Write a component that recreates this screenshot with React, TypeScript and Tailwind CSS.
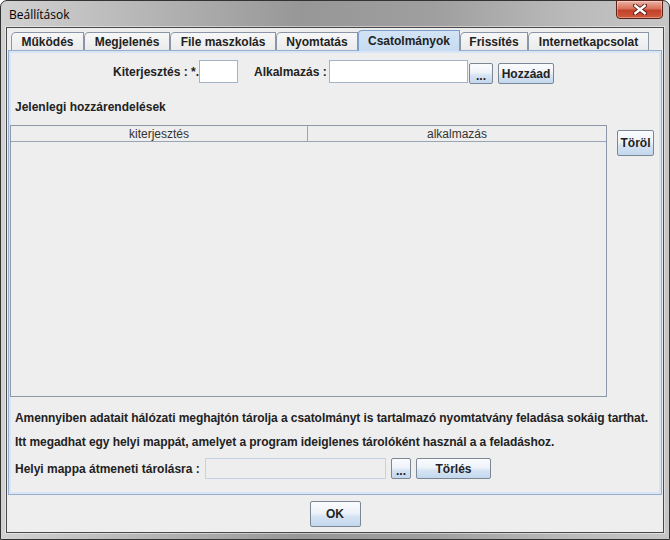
import React from "react";

const tabs = [
  { label: "Működés", w: 73 },
  { label: "Megjelenés", w: 86 },
  { label: "File maszkolás", w: 106 },
  { label: "Nyomtatás", w: 82 },
  { label: "Csatolmányok", w: 102, sel: true },
  { label: "Frissítés", w: 68 },
  { label: "Internetkapcsolat", w: 121 },
];

const btn =
  "flex items-center justify-center border border-[#7c8796] rounded-[2px] bg-[linear-gradient(to_bottom,#fbfcfe_0%,#eef3f9_45%,#d6e4f3_60%,#c3d7ee_100%)] text-[12px] font-bold text-[#222] leading-none";

function CloseX() {
  return (
    <svg width="14" height="11" viewBox="0 0 14 11">
      <path d="M2 1.5 L12 9.5 M12 1.5 L2 9.5" stroke="#5a1a12" strokeWidth="4.2" strokeLinecap="square" />
      <path d="M2.3 1.8 L11.7 9.2 M11.7 1.8 L2.3 9.2" stroke="#ffffff" strokeWidth="2.4" strokeLinecap="square" />
    </svg>
  );
}

export default function App() {
  return (
    <div
      className="w-[670px] h-[540px] bg-white"
      style={{ fontFamily: '"Liberation Sans", Arial, sans-serif' }}
    >
      <div className="w-full h-full flex flex-col rounded-t-[7px] border border-[#333] bg-[linear-gradient(to_right,#d2d2d2_0%,#b5b5b5_22%,#979797_45%,#9f9f9f_65%,#bababa_85%,#c6c6c6_100%)]">
        {/* title bar */}
        <div className="h-[26px] flex items-start shrink-0">
          <div
            className="pl-[8px] pt-[6px] text-[12px] leading-[16px] text-black"
            style={{ fontFamily: '"Open Sans", "Noto Sans", sans-serif' }}
          >
            Beállítások
          </div>
          <div className="ml-auto mr-[6px] -mt-[1px] w-[47px] h-[19px] rounded-b-[4px] border border-[#5b2219] bg-[linear-gradient(to_bottom,#eab3a5_0%,#d9705b_45%,#c2412a_55%,#d2593c_100%)] flex items-center justify-center shadow-[inset_0_0_0_1px_rgba(255,255,255,0.35)]">
            <CloseX />
          </div>
        </div>

        {/* client area */}
        <div className="flex-1 mx-[5px] mb-[6px] border border-[#4a4a4a] bg-[#eeeeee] flex flex-col shadow-[0_0_0_1px_rgba(255,255,255,0.45)]">
          {/* tabbed pane */}
          <div className="mx-[1px] mt-[3px] flex flex-col">
            <div className="h-[19px] flex items-end pl-[3px]">
              {tabs.map((t) =>
                t.sel ? (
                  <div
                    key={t.label}
                    style={{ width: t.w }}
                    className="relative z-10 -mb-[1px] h-[21px] rounded-tl-[4px] border border-b-0 border-[#7b9dca] bg-[linear-gradient(to_bottom,#d2e3f5,#c7dcf2)] flex items-start justify-center pt-[3px] text-[12px] font-bold text-[#222] leading-[14px] whitespace-nowrap"
                  >
                    {t.label}
                  </div>
                ) : (
                  <div
                    key={t.label}
                    style={{ width: t.w }}
                    className="h-[18px] rounded-tl-[5px] border border-b-0 border-[#8a96a7] bg-[linear-gradient(to_bottom,#f7f7f7,#ebebeb)] flex items-start justify-center pt-[2px] text-[12px] font-bold text-[#222] leading-[14px] whitespace-nowrap"
                  >
                    {t.label}
                  </div>
                )
              )}
            </div>
            <div className="h-[445px] border border-[#97afcf] shadow-[inset_0_0_0_2px_#d8e5f4] bg-[#eeeeee] flex flex-col text-[12px] text-[#222]">
              {/* row 1 */}
              <div className="mt-[9px] h-[24px] flex items-center pl-[104px]">
                <div className="w-[86px] text-right font-bold whitespace-nowrap">Kiterjesztés : *.</div>
                <div className="self-start w-[39px] h-[23px] bg-white border border-[#a3b4c8]" />
                <div className="ml-[16px] w-[72px] font-bold whitespace-nowrap">Alkalmazás :</div>
                <div className="ml-[3px] self-start w-[139px] h-[23px] bg-white border border-[#a3b4c8]" />
                <div className={`ml-[1px] self-end w-[24px] h-[21px] ${btn}`}>
                  <span className="mt-[4px]">...</span>
                </div>
                <div className={`ml-[5px] self-end w-[56px] h-[21px] ${btn}`}>Hozzáad</div>
              </div>

              <div className="mt-[15px] ml-[6px] h-[16px] leading-[16px] font-bold whitespace-nowrap">
                Jelenlegi hozzárendelések
              </div>

              {/* table row */}
              <div className="mt-[10px] flex items-start">
                <div className="ml-[1px] w-[597px] h-[272px] border border-[#8d99a8] bg-[#eeeeee] flex flex-col">
                  <div className="h-[16px] flex border-b border-[#9aa5b3]">
                    <div className="w-[297px] border-r border-[#9aa5b3] flex items-center justify-center text-[12px] text-[#333] leading-none">
                      kiterjesztés
                    </div>
                    <div className="flex-1 flex items-center justify-center text-[12px] text-[#333] leading-none">
                      alkalmazás
                    </div>
                  </div>
                </div>
                <div className={`ml-[10px] mt-[5px] w-[37px] h-[26px] ${btn}`}>Töröl</div>
              </div>

              <div className="mt-[13px] ml-[6px] h-[16px] leading-[16px] font-bold whitespace-nowrap tracking-[-0.06px]">
                Amennyiben adatait hálózati meghajtón tárolja a csatolmányt is tartalmazó nyomtatvány feladása sokáig tarthat.
              </div>
              <div className="mt-[8px] ml-[6px] h-[16px] leading-[16px] font-bold whitespace-nowrap tracking-[-0.06px]">
                Itt megadhat egy helyi mappát, amelyet a program ideiglenes tárolóként használ a a feladáshoz.
              </div>
              <div className="mt-[8px] ml-[6px] h-[21px] flex items-center">
                <div className="w-[184px] font-bold whitespace-nowrap">Helyi mappa átmeneti tárolásra :</div>
                <div className="ml-[6px] w-[181px] h-[21px] bg-[#eeeeee] border border-[#c4d3e4]" />
                <div className={`ml-[5px] w-[20px] h-[21px] ${btn}`}>
                  <span className="mt-[4px]">...</span>
                </div>
                <div className={`ml-[5px] w-[75px] h-[21px] ${btn}`}>Törlés</div>
              </div>
            </div>
          </div>

          {/* bottom */}
          <div className="flex-1 flex justify-center">
            <div className={`mt-[6px] w-[51px] h-[26px] ${btn} border-[#6f7987]`}>OK</div>
          </div>
        </div>
      </div>
    </div>
  );
}
